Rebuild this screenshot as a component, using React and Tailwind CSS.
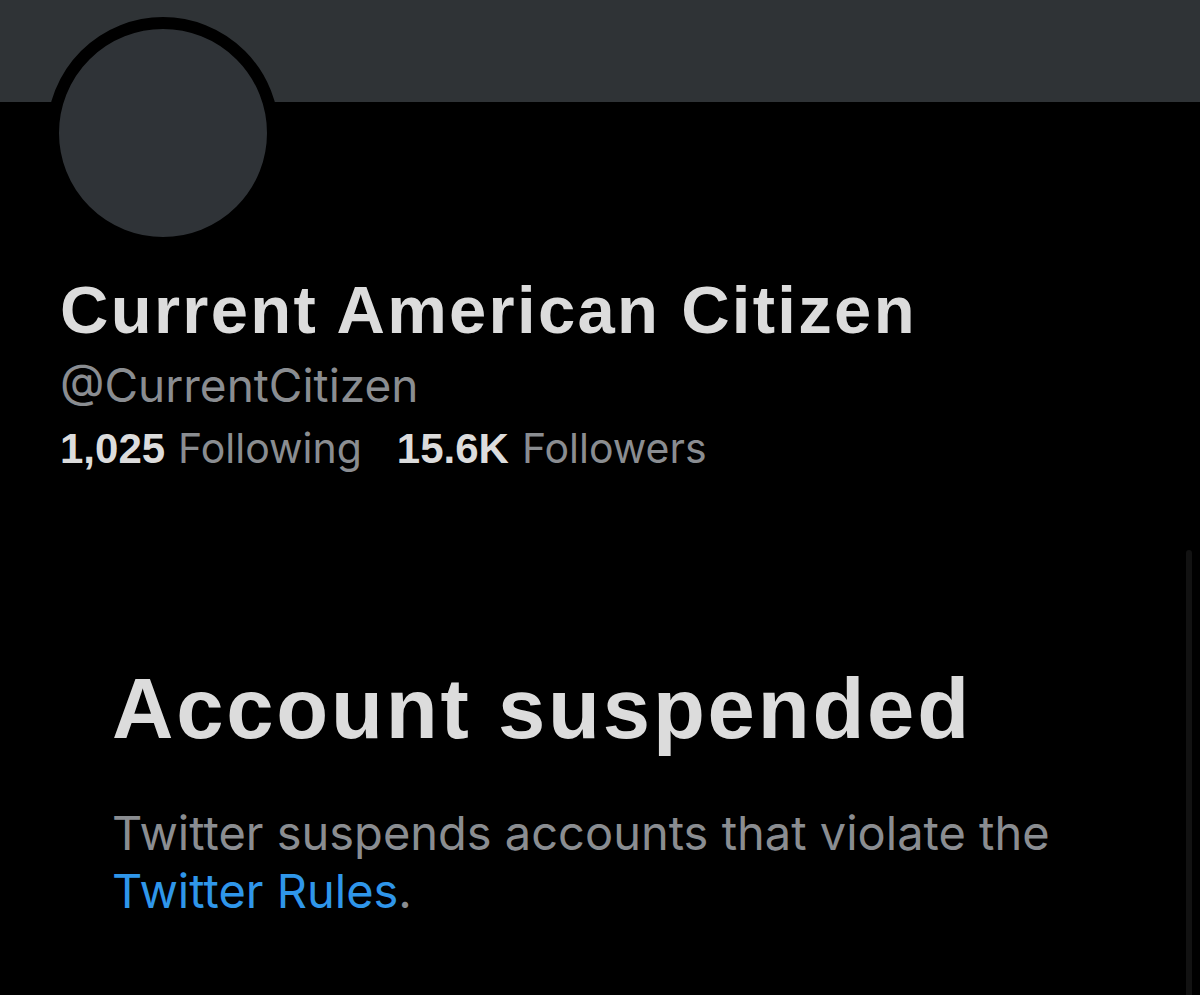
import React from "react";

const bold = { fontFamily: '"Liberation Sans", Arial, sans-serif' };
const regular = { fontFamily: 'Inter, "Liberation Sans", sans-serif' };

function Stat({ count, label }) {
    return (
        <span className="whitespace-nowrap">
            <span className="text-[42px] font-bold text-[#dcdcdc]" style={bold}>
                {count}
            </span>
            <span className="ml-[13px] text-[41px] text-[#8a8d91]" style={regular}>
                {label}
            </span>
        </span>
    );
}

function App() {
    return (
        <div className="relative w-[1200px] h-[995px] overflow-hidden bg-black">
            {/* header banner */}
            <div className="h-[102px] bg-[#2f3336]" />

            <div className="pl-[47px]">
                <div className="-mt-[85px] w-[232px] h-[232px] rounded-full border-[12px] border-black bg-[#2f3337]" />

                <div className="pl-[13px]">
                    <h1
                        className="mt-[27px] text-[67px] leading-none font-bold tracking-[2.3px] text-[#dcdcdc]"
                        style={bold}
                    >
                        Current American Citizen
                    </h1>
                    <p
                        className="mt-[19px] text-[46px] leading-none text-[#8a8d91]"
                        style={regular}
                    >
                        @CurrentCitizen
                    </p>
                    <div
                        className="mt-[20px] h-[42px] flex gap-[35px] leading-none"
                        style={regular}
                    >
                        <Stat count="1,025" label="Following" />
                        <Stat count="15.6K" label="Followers" />
                    </div>
                </div>
            </div>

            {/* suspended notice */}
            <div className="pl-[112px] pt-[196px]">
                <h2
                    className="text-[85px] leading-none font-bold tracking-[2.8px] text-[#dcdcdc]"
                    style={bold}
                >
                    Account suspended
                </h2>
                <p
                    className="mt-[53px] text-[47px] leading-[58px] text-[#8a8d91]"
                    style={regular}
                >
                    Twitter suspends accounts that violate the
                    <br />
                    <span className="text-[#2f96ea]">Twitter Rules</span>.
                </p>
            </div>

            {/* scrollbar */}
            <div className="absolute right-[8px] top-[550px] w-[6px] h-[460px] rounded-full bg-[#121212]" />
        </div>
    );
}

export default App;
